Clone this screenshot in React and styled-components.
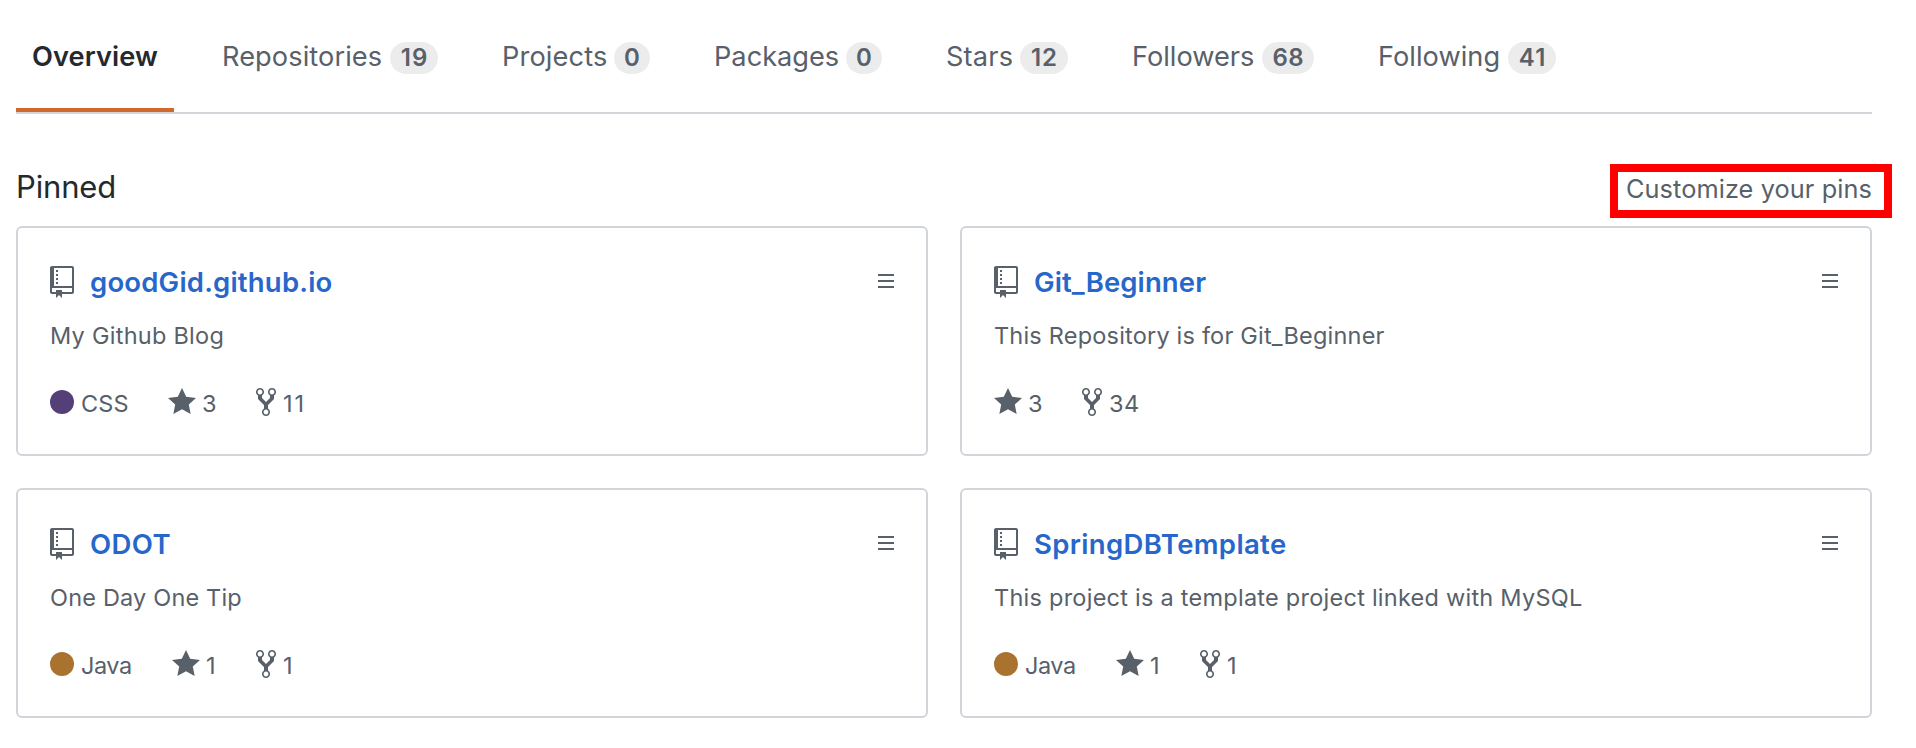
import React from "react";
import styled, { createGlobalStyle } from "styled-components";

const GlobalStyle = createGlobalStyle`
  *, *::before, *::after { box-sizing: border-box; }
  body {
    margin: 0;
    background: #fff;
    color: #24292e;
    font-family: Inter, "Liberation Sans", sans-serif;
  }
  a { color: inherit; text-decoration: none; }
`;

const Page = styled.main`
  width: 1856px;
  margin-left: 16px;
`;

const TabNav = styled.nav`
  display: flex;
  gap: 32px;
  height: 114px;
  border-bottom: 2px solid #d1d5da;
`;

const Tab = styled.a`
  display: flex;
  align-items: flex-start;
  height: 112px;
  padding: 41px 16px 0;
  border-bottom: 4px solid ${(p) => (p.$selected ? "#d1682e" : "transparent")};
  color: ${(p) => (p.$selected ? "#24292e" : "#586069")};
  font-size: 27.2px;
  font-weight: ${(p) => (p.$selected ? 600 : 400)};
  line-height: 32px;
  white-space: nowrap;
`;

const TabLabel = styled.span`
  width: ${(p) => p.$width}px;
  letter-spacing: ${(p) => p.$tracking}px;
`;

const Counter = styled.span`
  width: ${(p) => p.$width}px;
  height: 32px;
  margin: 1px 0 0 8px;
  border-radius: 16px;
  background: #ececec;
  color: #586069;
  font-size: 24px;
  font-weight: 600;
  line-height: 31px;
  letter-spacing: ${(p) => p.$tracking || 0}px;
  text-indent: ${(p) => p.$tracking || 0}px;
  text-align: center;
`;

const SectionHeader = styled.header`
  display: flex;
  justify-content: space-between;
  align-items: flex-start;
  height: 112px;
  padding-top: 48px;
`;

const SectionTitle = styled.h2`
  margin: 0;
  font-size: 31px;
  font-weight: 400;
  line-height: 49px;
  letter-spacing: -0.15px;
`;

const CustomizeLink = styled.a`
  position: relative;
  margin-top: 9px;
  color: #586069;
  font-size: 25.3px;
  line-height: 36px;
  letter-spacing: 0.1px;

  &::after {
    content: "";
    position: absolute;
    top: -7px;
    left: -16px;
    right: -20px;
    height: 54px;
    border: 8px solid #fe0000;
  }
`;

const PinGrid = styled.section`
  display: grid;
  grid-template-columns: 1fr 1fr;
  gap: 32px;
`;

const Card = styled.article`
  height: 230px;
  padding: 32px 32px 0;
  border: 2px solid #d1d5da;
  border-radius: 6px;
  color: #586069;
  font-size: 23.5px;
`;

const CardHead = styled.div`
  display: flex;
  align-items: center;
  gap: 16px;
  height: 44px;
`;

const RepoName = styled.a`
  flex: 1;
  color: #2767cb;
  font-size: 27.5px;
  font-weight: 600;
  line-height: 44px;
  letter-spacing: ${(p) => p.$tracking}px;
`;

const Description = styled.p`
  margin: 14px 0 31px;
  line-height: 35px;
  letter-spacing: ${(p) => p.$tracking}px;
`;

const MetaRow = styled.div`
  display: flex;
  gap: 39px;
  height: 36px;
`;

const MetaItem = styled.span`
  display: flex;
  align-items: center;
`;

const MetaText = styled.span`
  width: ${(p) => p.$width}px;
  margin-left: ${(p) => p.$gap || 7}px;
  padding-top: 3px;
  line-height: 36px;
  letter-spacing: ${(p) => p.$tracking || 0}px;
  white-space: nowrap;
`;

const LanguageDot = styled.span`
  width: 24px;
  height: 24px;
  border-radius: 50%;
  background: ${(p) => p.$color};
`;

const Icon = styled.svg`
  display: block;
  flex: none;
  height: 32px;
  fill: #586069;
`;

const ICONS = {
  repo: [12, "M4 9H3V8h1v1zm0-3H3v1h1V6zm0-2H3v1h1V4zm0-2H3v1h1V2zm8-1v12c0 .55-.45 1-1 1H6v2l-1.5-1.5L3 16v-2H1c-.55 0-1-.45-1-1V1c0-.55.45-1 1-1h10c.55 0 1 .45 1 1zm-1 10H1v2h2v-1h3v1h5v-2zm0-10H2v9h9V1z"],
  star: [14, "M14 6l-4.9-.64L7 1 4.9 5.36 0 6l3.6 3.26L2.67 14 7 11.67 11.33 14l-.93-4.74L14 6z"],
  fork: [10, "M8 1a1.993 1.993 0 0 0-1 3.72V6L5 8 3 6V4.72A1.993 1.993 0 0 0 2 1a1.993 1.993 0 0 0-1 3.72V6.5l3 3v1.78A1.993 1.993 0 0 0 5 15a1.993 1.993 0 0 0 1-3.72V9.5l3-3V4.72A1.993 1.993 0 0 0 8 1zM2 4.2C1.34 4.2.8 3.65.8 3c0-.65.55-1.2 1.2-1.2.65 0 1.2.55 1.2 1.2 0 .65-.55 1.2-1.2 1.2zm3 10c-.66 0-1.2-.55-1.2-1.2 0-.65.55-1.2 1.2-1.2.65 0 1.2.55 1.2 1.2 0 .65-.55 1.2-1.2 1.2zm3-10c-.66 0-1.2-.55-1.2-1.2 0-.65.55-1.2 1.2-1.2.65 0 1.2.55 1.2 1.2 0 .65-.55 1.2-1.2 1.2z"],
  grabber: [8, "M8 4v1H0V4h8zM0 8h8V7H0v1zm0 3h8v-1H0v1z"],
};

function Octicon({ name }) {
  const [width, d] = ICONS[name];
  return (
    <Icon viewBox={`0 0 ${width} 16`} width={width * 2} aria-hidden="true">
      <path fillRule="evenodd" d={d} />
    </Icon>
  );
}

const TABS = [
  { label: "Overview", width: 126, tracking: 0.08, selected: true },
  { label: "Repositories", width: 160, tracking: 0.08, count: 19, countWidth: 48, countTracking: 1 },
  { label: "Projects", width: 104, tracking: 0.12, count: 0, countWidth: 36 },
  { label: "Packages", width: 124, tracking: 0, count: 0, countWidth: 36 },
  { label: "Stars", width: 66, tracking: 0.18, count: 12, countWidth: 48, countTracking: 1 },
  { label: "Followers", width: 122, tracking: 0, count: 68, countWidth: 52, countTracking: 0.5 },
  { label: "Following", width: 122, tracking: 0.04, count: 41, countWidth: 48, countTracking: 1.2 },
];

const CSS = { name: "CSS", color: "#543f78", width: 48, tracking: 0.13 };
const JAVA = { name: "Java", color: "#a9722f", width: 52, tracking: -0.45 };

const DIGITS = {
  1: { width: 11, tracking: 0 },
  3: { width: 15, tracking: 0 },
  11: { width: 22, tracking: 2 },
  34: { width: 30, tracking: 0.5 },
};

const REPOS = [
  { name: "goodGid.github.io", tracking: 0.19, about: "My Github Blog", aboutTracking: 0.26, lang: CSS, stars: 3, forks: 11 },
  { name: "Git_Beginner", tracking: 0.1, about: "This Repository is for Git_Beginner", aboutTracking: 0.2, stars: 3, forks: 34 },
  { name: "ODOT", tracking: 0.4, about: "One Day One Tip", aboutTracking: 0.18, lang: JAVA, stars: 1, forks: 1 },
  { name: "SpringDBTemplate", tracking: 0.36, about: "This project is a template project linked with MySQL", aboutTracking: 0.25, lang: JAVA, stars: 1, forks: 1 },
];

function Count({ icon, value, gap }) {
  const { width, tracking } = DIGITS[value];
  return (
    <MetaItem>
      <Octicon name={icon} />
      <MetaText $gap={gap} $width={width} $tracking={tracking}>{value}</MetaText>
    </MetaItem>
  );
}

function RepoCard({ repo }) {
  return (
    <Card>
      <CardHead>
        <Octicon name="repo" />
        <RepoName href="#" $tracking={repo.tracking}>{repo.name}</RepoName>
        <Octicon name="grabber" />
      </CardHead>
      <Description $tracking={repo.aboutTracking}>{repo.about}</Description>
      <MetaRow>
        {repo.lang && (
          <MetaItem>
            <LanguageDot $color={repo.lang.color} />
            <MetaText $width={repo.lang.width} $tracking={repo.lang.tracking}>{repo.lang.name}</MetaText>
          </MetaItem>
        )}
        <Count icon="star" value={repo.stars} gap={6} />
        <Count icon="fork" value={repo.forks} gap={7} />
      </MetaRow>
    </Card>
  );
}

export default function App() {
  return (
    <>
      <GlobalStyle />
      <Page>
        <TabNav>
          {TABS.map((t) => (
            <Tab key={t.label} href="#" $selected={t.selected}>
              <TabLabel $width={t.width} $tracking={t.tracking}>{t.label}</TabLabel>
              {t.count !== undefined && (
                <Counter $width={t.countWidth} $tracking={t.countTracking}>{t.count}</Counter>
              )}
            </Tab>
          ))}
        </TabNav>
        <SectionHeader>
          <SectionTitle>Pinned</SectionTitle>
          <CustomizeLink href="#">Customize your pins</CustomizeLink>
        </SectionHeader>
        <PinGrid>
          {REPOS.map((repo) => (
            <RepoCard key={repo.name} repo={repo} />
          ))}
        </PinGrid>
      </Page>
    </>
  );
}
